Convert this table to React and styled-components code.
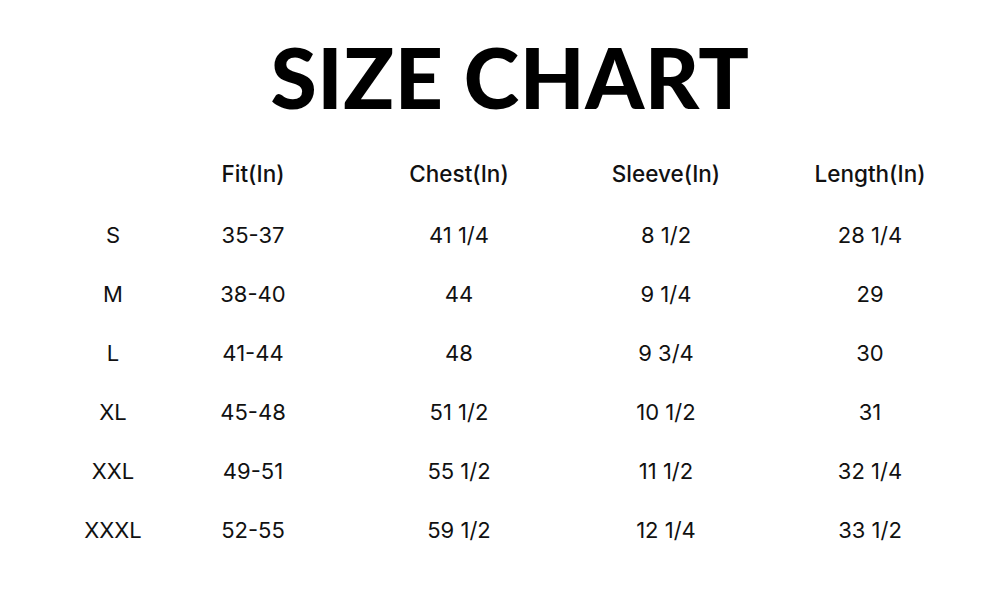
import React from "react";
import styled, { createGlobalStyle } from "styled-components";

const GlobalStyle = createGlobalStyle`
  html, body {
    margin: 0;
    padding: 0;
    background: #ffffff;
  }
  body {
    font-family: "Inter", "Liberation Sans", sans-serif;
    color: #111111;
  }
`;

const Page = styled.div`
  width: 1006px;
  height: 600px;
  box-sizing: border-box;
  padding-top: 31px;
  display: flex;
  flex-direction: column;
  align-items: center;
  background: #fff;
`;

const Title = styled.h1`
  margin: 0 0 0 14px;
  font-family: "Lato", "Liberation Sans", sans-serif;
  font-weight: 900;
  font-size: 84px;
  line-height: 92px;
  letter-spacing: 0.5px;
  color: #000;
`;

const Table = styled.div`
  align-self: flex-start;
  margin-top: 21px;
  margin-left: 53px;
  display: grid;
  grid-template-columns: 120px 160px 252px 162px 246px;
  grid-auto-rows: 59px;
`;

const Cell = styled.div`
  display: flex;
  align-items: center;
  justify-content: center;
  font-size: ${({ $head }) => ($head ? "22.5px" : "22px")};
  font-weight: ${({ $head }) => ($head ? 500 : 400)};
  color: #111;
  white-space: pre;
  transform: translateY(${({ $head }) => ($head ? "0px" : "2px")});
`;

const headers = ["", "Fit(In)", "Chest(In)", "Sleeve(In)", "Length(In)"];

const rows = [
  ["S", "35-37", "41 1/4", "8 1/2", "28 1/4"],
  ["M", "38-40", "44", "9 1/4", "29"],
  ["L", "41-44", "48", "9 3/4", "30"],
  ["XL", "45-48", "51 1/2", "10 1/2", "31"],
  ["XXL", "49-51", "55 1/2", "11 1/2", "32 1/4"],
  ["XXXL", "52-55", "59 1/2", "12 1/4", "33 1/2"],
];

export default function App() {
  return (
    <>
      <GlobalStyle />
      <Page>
        <Title>SIZE CHART</Title>
        <Table>
          {headers.map((h, i) => (
            <Cell key={"h" + i} $head>
              {h}
            </Cell>
          ))}
          {rows.map((r) =>
            r.map((v, i) => <Cell key={r[0] + i}>{v}</Cell>)
          )}
        </Table>
      </Page>
    </>
  );
}
